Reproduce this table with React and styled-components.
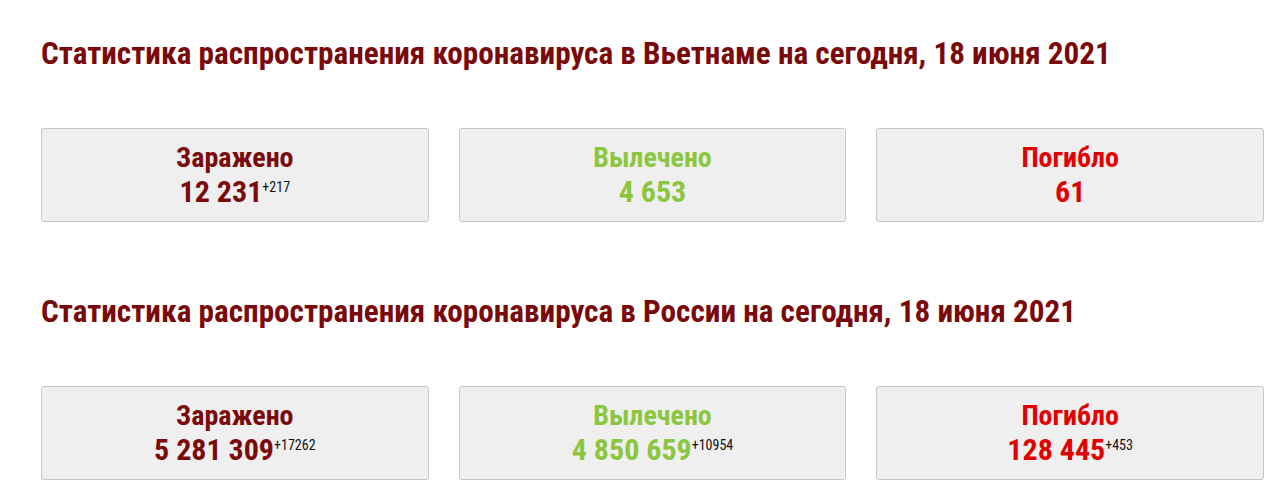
import React from "react";
import styled, { createGlobalStyle } from "styled-components";

const FONT = `"Roboto Condensed", "Liberation Sans Narrow", "Noto Sans", sans-serif`;

const GlobalStyle = createGlobalStyle`
  html, body { margin: 0; padding: 0; background: #ffffff; }
  body { font-family: ${FONT}; }
`;

const Page = styled.div`
  padding: 36px 22px 0 41px;
  display: flex;
  flex-direction: column;
  gap: 72px;
`;

const Section = styled.section`
  display: flex;
  flex-direction: column;
`;

const Title = styled.h2`
  margin: 0 0 56px 0;
  font-family: ${FONT};
  font-weight: 700;
  font-size: 31.2px;
  line-height: 36px;
  color: #7a0a0a;
  white-space: nowrap;
`;

const Cards = styled.div`
  display: grid;
  grid-template-columns: repeat(3, 1fr);
  gap: 30px;
`;

const Card = styled.div`
  background: #efefef;
  border: 1px solid #c6c6c6;
  border-radius: 3px;
  height: 92px;
  display: flex;
  flex-direction: column;
  align-items: center;
  justify-content: center;
  font-family: ${FONT};
  font-weight: 700;
  color: ${(p) => p.$color};
`;

const Label = styled.div`
  font-size: 28px;
  line-height: 34px;
`;

const Value = styled.div`
  font-size: 30px;
  line-height: 34px;
  display: flex;
  align-items: flex-start;
`;

const Delta = styled.span`
  font-size: 14px;
  line-height: 14px;
  font-weight: 400;
  color: #111;
  margin-top: 5px;
`;

const COLORS = {
  infected: "#7a0a0a",
  recovered: "#8cc63f",
  deaths: "#e10000",
};

const data = [
  {
    title: "Статистика распространения коронавируса в Вьетнаме на сегодня, 18 июня 2021",
    cards: [
      { label: "Заражено", value: "12 231", delta: "+217", kind: "infected" },
      { label: "Вылечено", value: "4 653", kind: "recovered" },
      { label: "Погибло", value: "61", kind: "deaths" },
    ],
  },
  {
    title: "Статистика распространения коронавируса в России на сегодня, 18 июня 2021",
    cards: [
      { label: "Заражено", value: "5 281 309", delta: "+17262", kind: "infected" },
      { label: "Вылечено", value: "4 850 659", delta: "+10954", kind: "recovered" },
      { label: "Погибло", value: "128 445", delta: "+453", kind: "deaths" },
    ],
  },
];

export default function App() {
  return (
    <>
      <GlobalStyle />
      <Page>
        {data.map((s) => (
          <Section key={s.title}>
            <Title>{s.title}</Title>
            <Cards>
              {s.cards.map((c) => (
                <Card key={c.label} $color={COLORS[c.kind]}>
                  <Label>{c.label}</Label>
                  <Value>
                    {c.value}
                    {c.delta && <Delta>{c.delta}</Delta>}
                  </Value>
                </Card>
              ))}
            </Cards>
          </Section>
        ))}
      </Page>
    </>
  );
}
